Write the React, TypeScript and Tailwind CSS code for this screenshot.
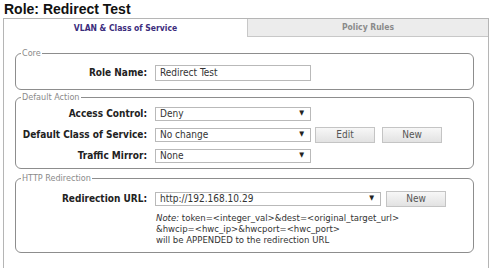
import React from "react";

const ui = "font-['DejaVu_Sans_Condensed','DejaVu_Sans',sans-serif]";

function Select({ value, w }: { value: string; w: string }) {
  return (
    <div
      className={`${w} h-[14px] border border-[#b9b9b9] bg-white flex items-center justify-between pl-[4px] pr-[6px] text-[10px] text-[#333]`}
    >
      <span>{value}</span>
      <span className="text-[7px] text-[#222]">▼</span>
    </div>
  );
}

function Button({ label }: { label: string }) {
  return (
    <div className="w-[60px] h-[16px] border border-[#c4c4c4] bg-gradient-to-b from-[#f7f7f7] to-[#e2e2e2] flex items-center justify-center text-[10px] text-[#555]">
      {label}
    </div>
  );
}

function Row({ label, children }: { label: string; children: React.ReactNode }) {
  return (
    <div className="flex items-center h-[21px]">
      <div className="w-[132px] pr-[1px] text-right font-bold text-[10px] text-[#222]">{label}</div>
      <div className="ml-[7px] flex items-center gap-[4px]">{children}</div>
    </div>
  );
}

function Group({ title, className, children }: { title: string; className: string; children: React.ReactNode }) {
  return (
    <fieldset className={`border border-[#8d8d8d] rounded-[6px] ${className}`}>
      <legend className="ml-[5px] px-[1px] text-[9px] leading-[10px] text-[#8a8a8a]">{title}</legend>
      {children}
    </fieldset>
  );
}

export default function App() {
  return (
    <div className={`w-[490px] h-[268px] bg-white overflow-hidden ${ui}`}>
      <h1 className="pl-[4px] pt-[1px] h-[18px] text-[14px] leading-[17px] font-bold text-[#111] font-['Liberation_Sans',Arial,sans-serif]">
        Role: Redirect Test
      </h1>

      <div className="ml-[3px] w-[486px] h-[250px] border border-b-0 border-[#b5b5b5]">
        <div className="flex h-[18px] text-[8.5px] font-bold">
          <div className="w-[243px] flex items-center justify-center text-[#3b2c7c]">
            VLAN &amp; Class of Service
          </div>
          <div className="flex-1 flex items-center justify-center bg-[#ececec] border-l border-b border-[#c8c8c8] text-[#8a8a8a]">
            Policy Rules
          </div>
        </div>

        <div className="ml-[11px] mr-[14px] flex flex-col">
          <Group title="Core" className="mt-[11px] pt-[4px] pb-[6px]">
            <Row label="Role Name:">
              <div className="w-[156px] h-[16px] border border-[#b9b9b9] bg-white flex items-center pl-[4px] text-[10px] text-[#333]">
                Redirect Test
              </div>
            </Row>
          </Group>

          <Group title="Default Action" className="mt-[2px] pt-[1px] pb-[2px]">
            <Row label="Access Control:">
              <Select value="Deny" w="w-[156px]" />
            </Row>
            <Row label="Default Class of Service:">
              <Select value="No change" w="w-[156px]" />
              <Button label="Edit" />
              <div className="ml-[3px]">
                <Button label="New" />
              </div>
            </Row>
            <Row label="Traffic Mirror:">
              <Select value="None" w="w-[156px]" />
            </Row>
          </Group>

          <Group title="HTTP Redirection" className="mt-[4px] pt-[5px] pb-[7px]">
            <Row label="Redirection URL:">
              <Select value="http://192.168.10.29" w="w-[226px]" />
              <div className="ml-[1px]">
                <Button label="New" />
              </div>
            </Row>
            <div className="ml-[140px] mt-[3px] text-[9.5px] leading-[11px] text-[#333]">
              <div>
                <i>Note:</i> token=&lt;integer_val&gt;&amp;dest=&lt;original_target_url&gt;
              </div>
              <div>&amp;hwcip=&lt;hwc_ip&gt;&amp;hwcport=&lt;hwc_port&gt;</div>
              <div>will be APPENDED to the redirection URL</div>
            </div>
          </Group>
        </div>
      </div>
    </div>
  );
}
